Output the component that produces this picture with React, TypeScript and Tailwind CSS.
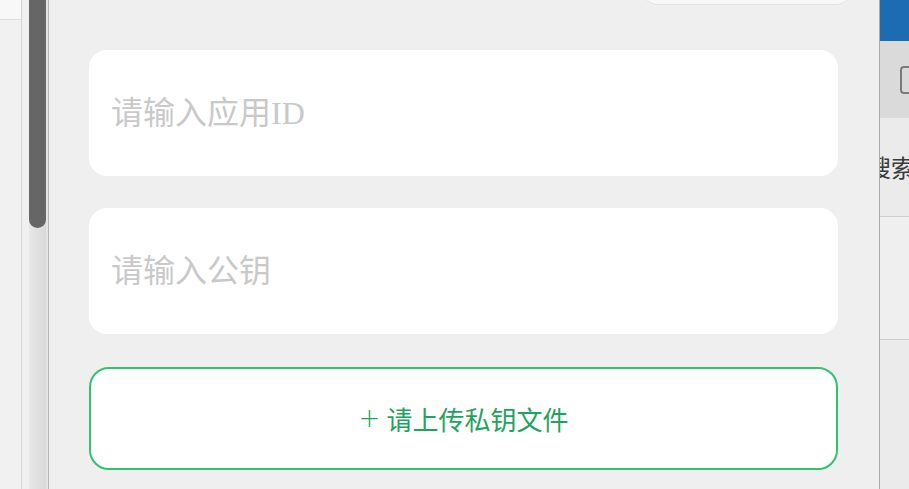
import React from 'react'

const KeyField = ({ placeholder }: { placeholder: string }) => (
    <input
        placeholder={placeholder}
        className="h-[126px] w-full rounded-[18px] bg-white px-[22px] text-[32px] text-[#333] outline-none placeholder:text-[#c9c9c9] [font-family:'Liberation_Serif','Noto_Sans_CJK_SC',serif]"
    />
)

const App = () => {
    return (
        <div className="flex h-[489px] w-[909px] overflow-hidden bg-[#f2f2f2] [font-family:'Noto_Sans_CJK_SC',sans-serif]">

            {/* page behind, left side */}
            <div className="flex w-[22px] shrink-0 flex-col border-r border-[#d6d6d6]">
                <div className="h-[20px] border-b border-[#dedede] bg-[#f8f8f8]" />
                <div className="flex-1 bg-[#f1f1f1]" />
            </div>

            {/* scrollbar */}
            <div className="flex w-[27px] shrink-0 bg-[#f0f0f0] pl-[7px]">
                <div className="flex w-[17px] flex-col bg-gradient-to-r from-[#e8e8e8] to-[#d9d9d9]">
                    <div className="h-[228px] rounded-b-[9px] bg-[#666]" />
                </div>
                <div className="w-[3px] border-r border-[#b5b5b5] bg-[#e4e4e4]" />
            </div>

            {/* dialog */}
            <section className="flex w-[830px] shrink-0 flex-col bg-[#efefef] pl-[40px] pr-[41px]">
                <div className="flex justify-end">
                    <div className="-mt-[30px] mr-[-15px] h-[35px] w-[212px] rounded-[18px] border border-[#e4e4e4] bg-[#f8f8f8]" />
                </div>

                <div className="mt-[45px] flex flex-col gap-[32px]">
                    <KeyField placeholder="请输入应用ID" />
                    <KeyField placeholder="请输入公钥" />
                </div>

                <button className="mt-[33px] flex h-[103px] w-full items-center justify-center gap-[6px] rounded-[20px] border-2 border-[#30c272] bg-white text-[26px] text-[#1ea45c]">
                    <span className="font-light [font-family:'DejaVu_Sans',sans-serif]">+</span>
                    <span>请上传私钥文件</span>
                </button>
            </section>

            {/* page behind, right side */}
            <div className="flex flex-1 flex-col border-l border-[#a9a9a9]">
                <div className="h-[41px] bg-[#1b6cb3]" />
                <div className="flex h-[77px] items-center bg-[#dadada] pl-[20px]">
                    <div className="h-[28px] w-[20px] shrink-0 rounded-[4px] border-2 border-[#7a7a7a]" />
                </div>
                <div className="flex h-[99px] items-center overflow-hidden border-b border-[#cfcfcf] bg-[#ebebeb]">
                    <span className="-ml-[13px] whitespace-nowrap text-[24px] text-[#3a3a3a]">搜索</span>
                </div>
                <div className="h-[123px] border-b border-[#cfcfcf] bg-[#efefef]" />
                <div className="flex-1 bg-[#ebebeb]" />
            </div>
        </div>
    )
}

export default App
